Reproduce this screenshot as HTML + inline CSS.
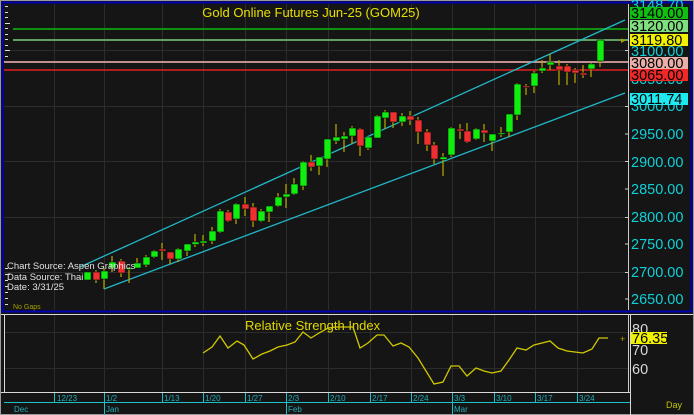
<!DOCTYPE html>
<html><head><meta charset="utf-8"><style>
html,body{margin:0;padding:0;background:#a0a0a0;}
svg{display:block;font-family:"Liberation Sans",sans-serif;}
</style></head><body>
<svg width="694" height="415" viewBox="0 0 694 415" xmlns="http://www.w3.org/2000/svg">
<rect x="0" y="0" width="694" height="415" fill="#9a9a9a"/>
<rect x="1" y="1" width="692" height="413" fill="#151515"/>
<rect x="2.5" y="2.5" width="689" height="309" fill="none" stroke="#0000b0" stroke-width="2"/>
<g stroke="#2c2c2c" stroke-width="1">
<line x1="54.5" y1="4" x2="54.5" y2="310"/><line x1="104.5" y1="4" x2="104.5" y2="310"/><line x1="162.5" y1="4" x2="162.5" y2="310"/><line x1="203.5" y1="4" x2="203.5" y2="310"/><line x1="245.5" y1="4" x2="245.5" y2="310"/><line x1="286.5" y1="4" x2="286.5" y2="310"/><line x1="328.5" y1="4" x2="328.5" y2="310"/><line x1="370.5" y1="4" x2="370.5" y2="310"/><line x1="411.5" y1="4" x2="411.5" y2="310"/><line x1="452.5" y1="4" x2="452.5" y2="310"/><line x1="494.5" y1="4" x2="494.5" y2="310"/><line x1="535.5" y1="4" x2="535.5" y2="310"/><line x1="577.5" y1="4" x2="577.5" y2="310"/>
<line x1="4" y1="50.5" x2="628" y2="50.5"/><line x1="4" y1="106.5" x2="628" y2="106.5"/><line x1="4" y1="161.5" x2="628" y2="161.5"/><line x1="4" y1="217.5" x2="628" y2="217.5"/><line x1="4" y1="272.5" x2="628" y2="272.5"/>
</g>
<g stroke="#ddd" stroke-width="1">
<line x1="5" y1="6.5" x2="8" y2="6.5"/><line x1="5" y1="12.5" x2="8" y2="12.5"/><line x1="5" y1="17.5" x2="8" y2="17.5"/><line x1="5" y1="23.5" x2="10" y2="23.5"/><line x1="5" y1="28.5" x2="8" y2="28.5"/><line x1="5" y1="34.5" x2="8" y2="34.5"/><line x1="5" y1="39.5" x2="8" y2="39.5"/><line x1="5" y1="45.5" x2="8" y2="45.5"/><line x1="5" y1="50.5" x2="10" y2="50.5"/><line x1="5" y1="56.5" x2="8" y2="56.5"/>
<line x1="5" y1="268.5" x2="8" y2="268.5"/><line x1="5" y1="274.5" x2="10" y2="274.5"/><line x1="5" y1="280.5" x2="8" y2="280.5"/><line x1="5" y1="286.5" x2="8" y2="286.5"/><line x1="5" y1="292.5" x2="8" y2="292.5"/><line x1="5" y1="298.5" x2="8" y2="298.5"/><line x1="5" y1="304.5" x2="8" y2="304.5"/>
</g>
<line x1="13" y1="29" x2="628" y2="29" stroke="#109010" stroke-width="2"/>
<line x1="13" y1="40" x2="628" y2="40" stroke="#60a060" stroke-width="2"/>
<line x1="4" y1="62" x2="628" y2="62" stroke="#c09090" stroke-width="2"/>
<line x1="4" y1="70" x2="628" y2="70" stroke="#e02020" stroke-width="1.5"/>
<line x1="80" y1="267" x2="625" y2="20" stroke="#20b8c8" stroke-width="1.3"/>
<line x1="104" y1="289" x2="625" y2="93" stroke="#20b8c8" stroke-width="1.3"/>
<g stroke="#b0a000" stroke-width="1.3">
<line x1="96" y1="270" x2="96" y2="283"/><line x1="104" y1="268" x2="104" y2="289"/><line x1="112" y1="256" x2="112" y2="272"/><line x1="121" y1="259" x2="121" y2="277"/><line x1="129" y1="267" x2="129" y2="283"/><line x1="137" y1="258" x2="137" y2="268"/><line x1="146" y1="255" x2="146" y2="267"/><line x1="154" y1="250" x2="154" y2="258"/><line x1="162" y1="243" x2="162" y2="260"/><line x1="170" y1="252" x2="170" y2="264"/><line x1="178" y1="248" x2="178" y2="262"/><line x1="187" y1="244" x2="187" y2="256"/><line x1="195" y1="234" x2="195" y2="247"/><line x1="203" y1="235" x2="203" y2="246"/><line x1="212" y1="227" x2="212" y2="244"/><line x1="220" y1="209" x2="220" y2="233"/><line x1="228" y1="210" x2="228" y2="222"/><line x1="236" y1="203" x2="236" y2="224"/><line x1="245" y1="197" x2="245" y2="216"/><line x1="253" y1="203" x2="253" y2="227"/><line x1="261" y1="209" x2="261" y2="222"/><line x1="269" y1="206" x2="269" y2="222"/><line x1="278" y1="193" x2="278" y2="207"/><line x1="286" y1="184" x2="286" y2="208"/><line x1="294" y1="178" x2="294" y2="195"/><line x1="303" y1="161" x2="303" y2="190"/><line x1="311" y1="155" x2="311" y2="171"/><line x1="319" y1="157" x2="319" y2="175"/><line x1="327" y1="139" x2="327" y2="167"/><line x1="336" y1="124" x2="336" y2="144"/>
<line x1="344" y1="132" x2="344" y2="152"/><line x1="352" y1="126" x2="352" y2="144"/><line x1="360" y1="128" x2="360" y2="156"/><line x1="368" y1="137" x2="368" y2="150"/><line x1="377" y1="115" x2="377" y2="138"/><line x1="385" y1="110" x2="385" y2="129"/><line x1="393" y1="112" x2="393" y2="128"/><line x1="402" y1="113" x2="402" y2="126"/><line x1="410" y1="111" x2="410" y2="125"/><line x1="418" y1="117" x2="418" y2="144"/><line x1="427" y1="129" x2="427" y2="151"/><line x1="434" y1="142" x2="434" y2="164"/><line x1="443" y1="153" x2="443" y2="176"/><line x1="451" y1="127" x2="451" y2="157"/><line x1="460" y1="124" x2="460" y2="139"/><line x1="467" y1="123" x2="467" y2="143"/><line x1="476" y1="128" x2="476" y2="140"/><line x1="484" y1="124" x2="484" y2="142"/><line x1="492" y1="134" x2="492" y2="151"/><line x1="501" y1="127" x2="501" y2="137"/><line x1="509" y1="114" x2="509" y2="137"/><line x1="517" y1="83" x2="517" y2="120"/><line x1="526" y1="84" x2="526" y2="95"/><line x1="534" y1="71" x2="534" y2="93"/><line x1="542" y1="60" x2="542" y2="73"/><line x1="550" y1="54" x2="550" y2="70"/><line x1="559" y1="60" x2="559" y2="85"/><line x1="567" y1="64" x2="567" y2="85"/><line x1="575" y1="68" x2="575" y2="83"/><line x1="583" y1="65" x2="583" y2="78"/><line x1="591" y1="63" x2="591" y2="77"/><line x1="600" y1="40" x2="600" y2="67"/>
</g>
<g stroke="#0a0a0a" stroke-width="0.6">
<rect x="84" y="272" width="7" height="8" fill="#10ee10"/><rect x="93" y="272" width="7" height="8" fill="#ee3030"/><rect x="101" y="271" width="7" height="8" fill="#10ee10"/><rect x="109" y="262" width="7" height="6" fill="#10ee10"/><rect x="118" y="261" width="7" height="12" fill="#ee3030"/><rect x="126" y="268" width="7" height="1.5" fill="#10ee10"/><rect x="134" y="263" width="7" height="5" fill="#10ee10"/><rect x="143" y="257" width="7" height="8" fill="#10ee10"/><rect x="151" y="251" width="7" height="6" fill="#10ee10"/><rect x="159" y="249" width="7" height="2" fill="#ee3030"/><rect x="167" y="252" width="7" height="7" fill="#ee3030"/><rect x="175" y="249" width="7" height="10" fill="#10ee10"/><rect x="184" y="244" width="7" height="7" fill="#10ee10"/><rect x="192" y="242" width="7" height="2.5" fill="#10ee10"/><rect x="200" y="241" width="7" height="2" fill="#10ee10"/><rect x="209" y="231" width="7" height="10" fill="#10ee10"/><rect x="217" y="211" width="7" height="21" fill="#10ee10"/><rect x="225" y="212" width="7" height="9" fill="#ee3030"/><rect x="233" y="204" width="7" height="15" fill="#10ee10"/><rect x="242" y="204" width="7" height="5" fill="#ee3030"/><rect x="250" y="207" width="7" height="14" fill="#ee3030"/><rect x="258" y="211" width="7" height="10" fill="#10ee10"/><rect x="266" y="206" width="7" height="6" fill="#10ee10"/><rect x="275" y="197" width="7" height="9" fill="#10ee10"/><rect x="283" y="194" width="7" height="3" fill="#10ee10"/><rect x="291" y="184" width="7" height="10" fill="#10ee10"/><rect x="300" y="162" width="7" height="24" fill="#10ee10"/><rect x="308" y="162" width="7" height="5" fill="#ee3030"/><rect x="316" y="157" width="7" height="9" fill="#10ee10"/><rect x="324" y="139" width="7" height="20" fill="#10ee10"/><rect x="333" y="137" width="7" height="4" fill="#10ee10"/>
<rect x="341" y="136" width="7" height="3" fill="#10ee10"/><rect x="349" y="128" width="7" height="8" fill="#10ee10"/><rect x="357" y="129" width="7" height="17" fill="#ee3030"/><rect x="365" y="137" width="7" height="11" fill="#10ee10"/><rect x="374" y="116" width="7" height="22" fill="#10ee10"/><rect x="382" y="112" width="7" height="6" fill="#10ee10"/><rect x="390" y="112" width="7" height="10" fill="#ee3030"/><rect x="399" y="116" width="7" height="6" fill="#10ee10"/><rect x="407" y="116" width="7" height="4" fill="#ee3030"/><rect x="415" y="120" width="7" height="12" fill="#ee3030"/><rect x="424" y="132" width="7" height="13" fill="#ee3030"/><rect x="431" y="145" width="7" height="14" fill="#ee3030"/><rect x="440" y="157" width="7" height="2.5" fill="#10ee10"/><rect x="448" y="128" width="7" height="27" fill="#10ee10"/><rect x="457" y="129" width="7" height="2" fill="#ee3030"/><rect x="464" y="131" width="7" height="11" fill="#ee3030"/><rect x="473" y="129" width="7" height="10" fill="#10ee10"/><rect x="481" y="130" width="7" height="3" fill="#ee3030"/><rect x="489" y="134" width="7" height="7" fill="#10ee10"/><rect x="498" y="133" width="7" height="1.5" fill="#10ee10"/><rect x="506" y="114" width="7" height="18" fill="#10ee10"/><rect x="514" y="84" width="7" height="31" fill="#10ee10"/><rect x="523" y="86" width="7" height="1.5" fill="#ee3030"/><rect x="531" y="73" width="7" height="13" fill="#10ee10"/><rect x="539" y="68" width="7" height="3" fill="#10ee10"/><rect x="547" y="62" width="7" height="3" fill="#10ee10"/><rect x="556" y="66" width="7" height="4" fill="#ee3030"/><rect x="564" y="66" width="7" height="6" fill="#ee3030"/><rect x="572" y="70" width="7" height="3" fill="#ee3030"/><rect x="580" y="73" width="7" height="2" fill="#ee3030"/><rect x="588" y="64" width="7" height="5" fill="#10ee10"/><rect x="597" y="40" width="7" height="21" fill="#10ee10"/>
</g>
<text x="311" y="17" fill="#e8e000" font-size="13" text-anchor="middle">Gold  Online  Futures  Jun-25  (GOM25)</text>
<g fill="#e0e0e0" font-size="9.5">
<text x="7" y="269">Chart  Source:  Aspen  Graphics</text>
<text x="7" y="280">Data  Source:  Thai</text>
<text x="7" y="290">Date:    3/31/25</text>
</g>
<text x="13" y="309" fill="#a0a000" font-size="7">No  Gaps</text>
<line x1="628.5" y1="4" x2="628.5" y2="310" stroke="#ccc"/>
<g stroke="#ccc"><line x1="625" y1="50.5" x2="629" y2="50.5"/><line x1="625" y1="106.5" x2="629" y2="106.5"/><line x1="625" y1="161.5" x2="629" y2="161.5"/><line x1="625" y1="217.5" x2="629" y2="217.5"/><line x1="625" y1="272.5" x2="629" y2="272.5"/><line x1="625" y1="134" x2="629" y2="134"/><line x1="625" y1="189" x2="629" y2="189"/><line x1="625" y1="244" x2="629" y2="244"/><line x1="625" y1="299" x2="629" y2="299"/></g>
<g font-size="14.5" fill="#10d0d8">
<text x="631" y="10">3148.70</text>
<text x="631" y="56">3100.00</text>
<text x="631" y="84">3050.00</text>
<text x="631" y="111">3000.00</text>
<text x="631" y="139">2950.00</text>
<text x="631" y="167">2900.00</text>
<text x="631" y="194">2850.00</text>
<text x="631" y="222">2800.00</text>
<text x="631" y="249">2750.00</text>
<text x="631" y="277">2700.00</text>
<text x="631" y="304">2650.00</text>
</g>
<g font-size="14.5" fill="#000">
<rect x="630" y="7" width="58" height="12" fill="#10c010"/><text x="631" y="18">3140.00</text>
<rect x="630" y="20" width="58" height="12" fill="#80e080"/><text x="631" y="31">3120.00</text>
<rect x="630" y="34" width="58" height="12" fill="#f0f000"/><text x="631" y="45">3119.80</text>
<rect x="630" y="57" width="58" height="12" fill="#e8b0a8"/><text x="631" y="68">3080.00</text>
<rect x="630" y="69" width="58" height="12" fill="#f02828"/><text x="631" y="80">3065.00</text>
<rect x="630" y="93" width="58" height="12" fill="#20e8f0"/><text x="631" y="104">3011.74</text>
</g>
<text x="621" y="43" font-size="9" fill="#b0a000">▸</text>
<line x1="1" y1="314.5" x2="693" y2="314.5" stroke="#d8d8d8"/>
<line x1="630.5" y1="314" x2="630.5" y2="415" stroke="#d8d8d8"/>
<line x1="4.5" y1="315" x2="4.5" y2="392" stroke="#d8d8d8"/>
<g stroke="#2c2c2c">
<line x1="54.5" y1="315" x2="54.5" y2="392"/><line x1="104.5" y1="315" x2="104.5" y2="392"/><line x1="162.5" y1="315" x2="162.5" y2="392"/><line x1="203.5" y1="315" x2="203.5" y2="392"/><line x1="245.5" y1="315" x2="245.5" y2="392"/><line x1="286.5" y1="315" x2="286.5" y2="392"/><line x1="328.5" y1="315" x2="328.5" y2="392"/><line x1="370.5" y1="315" x2="370.5" y2="392"/><line x1="411.5" y1="315" x2="411.5" y2="392"/><line x1="452.5" y1="315" x2="452.5" y2="392"/><line x1="494.5" y1="315" x2="494.5" y2="392"/><line x1="535.5" y1="315" x2="535.5" y2="392"/><line x1="577.5" y1="315" x2="577.5" y2="392"/>
<line x1="5" y1="332.5" x2="628" y2="332.5"/><line x1="5" y1="368.5" x2="628" y2="368.5"/>
</g>
<line x1="628.5" y1="315" x2="628.5" y2="392" stroke="#ccc"/>
<text x="245" y="330" fill="#e0d800" font-size="13">Relative  Strength  Index</text>
<polyline fill="none" stroke="#d0c800" stroke-width="1.3" points="203,353 212,347 220,336 228,348 237,341 244,345 253,359 262,354 270,351 278,347 287,345 295,342 303,332 311,338 319,333 328,328 336,327 344,327 353,327 360,348 368,343 377,335 384,335 393,346 401,343 409,347 418,358 426,371 434,384 443,382 451,366 459,366 467,376 476,368 484,371 492,373 501,371 509,360 517,348 526,350 534,345 542,343 550,341 558,348 567,351 575,352 583,353 592,349 599,338 608,338"/>
<g font-size="14.5" fill="#d8d8d8"><text x="632" y="334">80</text><text x="632" y="355">70</text><text x="632" y="374">60</text></g>
<rect x="631" y="332" width="36" height="12" fill="#f0f000"/><text x="632" y="343" font-size="14.5" fill="#000">76.35</text>
<text x="620" y="342" font-size="9" fill="#b0a000">+</text>
<line x1="1" y1="392.5" x2="630" y2="392.5" stroke="#d8d8d8"/>
<line x1="4" y1="402.5" x2="630" y2="402.5" stroke="#20c0c8"/>
<g stroke="#20c0c8"><line x1="54.5" y1="393" x2="54.5" y2="402"/><line x1="104.5" y1="393" x2="104.5" y2="415"/><line x1="162.5" y1="393" x2="162.5" y2="402"/><line x1="203.5" y1="393" x2="203.5" y2="402"/><line x1="245.5" y1="393" x2="245.5" y2="402"/><line x1="286.5" y1="393" x2="286.5" y2="415"/><line x1="328.5" y1="393" x2="328.5" y2="402"/><line x1="370.5" y1="393" x2="370.5" y2="402"/><line x1="411.5" y1="393" x2="411.5" y2="402"/><line x1="452.5" y1="393" x2="452.5" y2="415"/><line x1="494.5" y1="393" x2="494.5" y2="402"/><line x1="535.5" y1="393" x2="535.5" y2="402"/><line x1="577.5" y1="393" x2="577.5" y2="402"/></g>
<g font-size="8" fill="#20b0b8">
<text x="57" y="401">12/23</text><text x="106" y="401">1/2</text><text x="164" y="401">1/13</text><text x="205" y="401">1/20</text><text x="247" y="401">1/27</text><text x="288" y="401">2/3</text><text x="330" y="401">2/10</text><text x="372" y="401">2/17</text><text x="413" y="401">2/24</text><text x="454" y="401">3/3</text><text x="496" y="401">3/10</text><text x="537" y="401">3/17</text><text x="579" y="401">3/24</text>
<text x="14" y="412">Dec</text><text x="106" y="412">Jan</text><text x="288" y="412">Feb</text><text x="454" y="412">Mar</text>
</g>
<text x="666" y="408" font-size="9" fill="#c0c000">Day</text>
</svg>
</body></html>
